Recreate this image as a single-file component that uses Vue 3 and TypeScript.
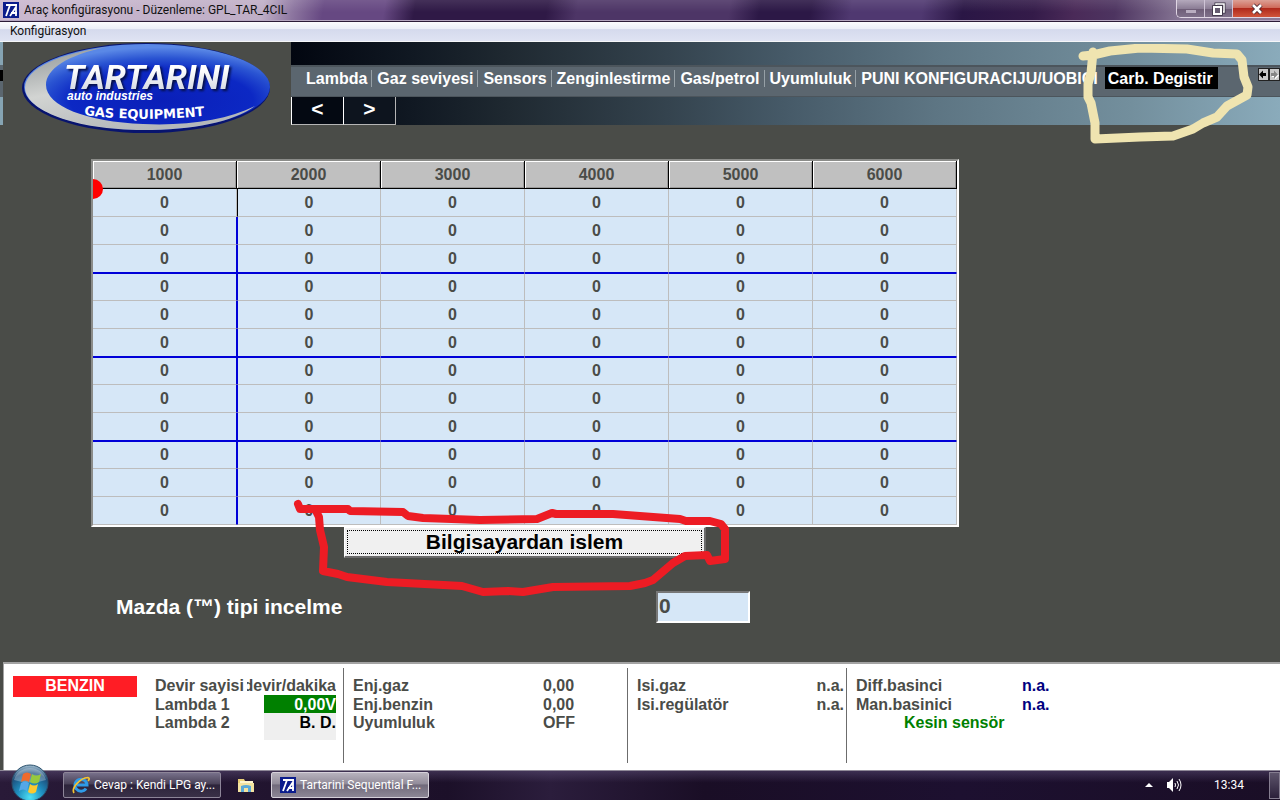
<script setup lang="ts">
import { ref } from 'vue'

const tabs: string[] = [
  'Lambda',
  'Gaz seviyesi',
  'Sensors',
  'Zenginlestirme',
  'Gas/petrol',
  'Uyumluluk',
  'PUNI KONFIGURACIJU/UOBICI',
  'Carb. Degistir',
]
const activeTab = ref<string>('Carb. Degistir')

const columns: number[] = [1000, 2000, 3000, 4000, 5000, 6000]
const rows: number[][] = Array.from({ length: 12 }, () => columns.map(() => 0))
const thinning = ref<string>('0')
</script>

<template>
  <div class="screen">
    <header class="titlebar">
      <svg class="app-icon" viewBox="0 0 16 16" aria-hidden="true">
        <rect width="16" height="16" fill="#0b1c8c" />
        <path d="M3 3h11M7 3L3 14M7 14l6-9v9M8 11h6" stroke="#fff" stroke-width="1.8" fill="none" />
      </svg>
      <h1>Araç konfigürasyonu - Düzenleme: GPL_TAR_4CIL</h1>
      <div class="window-buttons">
        <button type="button" aria-label="Minimize">
          <svg width="12" height="12" viewBox="0 0 12 12"><rect x="1" y="7" width="10" height="3" fill="#b9adc0" /></svg>
        </button>
        <button type="button" aria-label="Restore">
          <svg width="14" height="14" viewBox="0 0 14 14">
            <path d="M4 4V2h8v8h-2" fill="none" stroke="#3b3344" stroke-width="3" />
            <path d="M4 3V2h8v8h-1" fill="none" stroke="#fff" stroke-width="1.5" />
            <rect x="2" y="5" width="7" height="7" fill="none" stroke="#3b3344" stroke-width="3.6" />
            <rect x="2" y="5" width="7" height="7" fill="#655b70" stroke="#fff" stroke-width="2" />
          </svg>
        </button>
        <button type="button" class="close" aria-label="Close">
          <svg width="14" height="12" viewBox="0 0 14 12">
            <path d="M3 2l8 8M11 2l-8 8" stroke="#4c2830" stroke-width="4.4" />
            <path d="M3 2l8 8M11 2l-8 8" stroke="#fff" stroke-width="2.6" />
          </svg>
        </button>
      </div>
    </header>

    <nav class="menubar"><button type="button">Konfigürasyon</button></nav>

    <main class="workspace">
      <div class="head">
        <div class="edge"><i class="edge-band"></i></div>
        <div class="brand">
          <svg class="logo" viewBox="0 0 252 92" role="img" aria-label="Tartarini auto industries gas equipment">
            <defs>
              <radialGradient id="blue" cx="0.56" cy="0.66" r="0.62">
                <stop offset="0" stop-color="#0a1fb8" />
                <stop offset="0.6" stop-color="#0c28c4" />
                <stop offset="0.8" stop-color="#2a54d2" />
                <stop offset="1" stop-color="#5a88e6" />
              </radialGradient>
              <linearGradient id="silver" x1="0" y1="0" x2="0.5" y2="1">
                <stop offset="0" stop-color="#8e9496" />
                <stop offset="0.5" stop-color="#d2d4d2" />
                <stop offset="1" stop-color="#b4b8ba" />
              </linearGradient>
              <linearGradient id="letters" x1="0" y1="0" x2="0" y2="1">
                <stop offset="0.3" stop-color="#fff" />
                <stop offset="1" stop-color="#c9cfdb" />
              </linearGradient>
              <path id="arc" d="M63 73Q126 81 200 72" />
            </defs>
            <ellipse cx="125" cy="46" rx="124" ry="45" fill="#08146e" />
            <ellipse cx="126" cy="45" rx="123" ry="43" fill="url(#blue)" />
            <path d="M86 5C40 11 4 26 4 46c0 22 50 42 118 42 50 0 90-8 112-24-28 14-68 20-112 18C66 80 25 64 25 43 25 27 46 13 86 5z" fill="url(#silver)" />
            <g font-weight="700">
              <text class="wordmark" x="43" y="47" font-size="34" font-style="italic" fill="url(#letters)">TARTARINI</text>
              <text x="46" y="58" font-size="12" font-style="italic" fill="#fff">auto industries</text>
              <text class="tagline" font-size="13" fill="#fff"><textPath href="#arc">GAS EQUIPMENT</textPath></text>
            </g>
          </svg>
        </div>
        <div class="banner">
          <div class="tabband">
            <div class="tabs" role="tablist">
              <button
                v-for="tab in tabs"
                :key="tab"
                type="button"
                role="tab"
                :aria-selected="tab === activeTab"
                :class="{ active: tab === activeTab }"
                @click="activeTab = tab"
              >{{ tab }}</button>
            </div>
            <div class="scrollers">
              <button type="button" aria-label="Scroll tabs left">
                <svg width="9" height="9" viewBox="0 0 9 9"><path d="M0 4.500l4-4v2.500h3v3h-3v2.500z" fill="#000" /></svg>
              </button>
              <button type="button" aria-label="Scroll tabs right">
                <svg width="9" height="9" viewBox="0 0 9 9">
                  <path d="M9 5.500l-4-4v2.500h-3v3h3v2.500z" fill="#fff" />
                  <path d="M8 4.500l-4-4v2.500h-3v3h3v2.500z" fill="#858585" />
                </svg>
              </button>
            </div>
          </div>
          <div class="pager">
            <button type="button">&lt;</button>
            <button type="button">&gt;</button>
          </div>
        </div>
      </div>

      <div class="sheet">
        <table>
          <thead>
            <tr><th v-for="c in columns" :key="c" scope="col">{{ c }}</th></tr>
          </thead>
          <tbody>
            <tr v-for="(row, r) in rows" :key="r">
              <td v-for="(cell, c) in row" :key="c">{{ cell }}</td>
            </tr>
          </tbody>
        </table>
        <span class="marker"></span>
      </div>

      <div class="action"><button type="button"><span>Bilgisayardan islem</span></button></div>

      <div class="field">
        <label for="thinning">Mazda (™) tipi incelme</label>
        <input id="thinning" v-model="thinning" type="text" />
      </div>

      <svg class="ink red" width="450" height="110" viewBox="289 496 450 110" aria-hidden="true">
        <path d="M298 504L300 509 348 509 350 511 403 512 408 516 423 518 480 520 537 519 552 513 556 514 613 514 680 519 686 521 710 521 721 524 725 529 725 559 710 561 707 555 685 556 673 563 653 580 645 583 630 586 553 587 523 592 508 591 483 592 462 586 387 582 347 577 338 574 323 571 324 547 320 530 319 517 316 511" />
      </svg>
      <svg class="ink yellow" width="176" height="104" viewBox="1078 44 176 104" aria-hidden="true">
        <path d="M1083 56L1093 55 1110 51 1140 48 1187 49 1213 53 1237 54 1242 60 1244 77 1248 87 1247 95 1227 106 1217 117 1203 123 1193 129 1173 136 1140 137 1095 139 1095 123 1091 103 1088 97 1088 84 1091 73 1093 52" />
      </svg>
    </main>

    <footer class="status">
      <section class="group first">
        <strong class="fuel">BENZIN</strong>
        <dl>
          <div><dt>Devir sayisi</dt><dd class="unit">devir/dakika</dd></div>
          <div><dt>Lambda 1</dt><dd class="on">0,00V</dd></div>
          <div><dt>Lambda 2</dt><dd class="off">B. D.</dd></div>
        </dl>
      </section>
      <section class="group second">
        <dl>
          <div><dt>Enj.gaz</dt><dd>0,00</dd></div>
          <div><dt>Enj.benzin</dt><dd>0,00</dd></div>
          <div><dt>Uyumluluk</dt><dd>OFF</dd></div>
        </dl>
      </section>
      <section class="group third">
        <dl>
          <div><dt>Isi.gaz</dt><dd>n.a.</dd></div>
          <div><dt>Isi.regülatör</dt><dd>n.a.</dd></div>
        </dl>
      </section>
      <section class="group fourth">
        <dl>
          <div><dt>Diff.basinci</dt><dd>n.a.</dd></div>
          <div><dt>Man.basinici</dt><dd>n.a.</dd></div>
        </dl>
        <p>Kesin sensör</p>
      </section>
    </footer>

    <div class="taskbar">
      <button type="button" class="start" aria-label="Start">
        <svg width="38" height="38" viewBox="0 0 38 38">
          <defs>
            <radialGradient id="orb" cx="0.5" cy="0.9" r="0.9">
              <stop offset="0" stop-color="#4fe0f4" />
              <stop offset="0.4" stop-color="#1f8fc0" />
              <stop offset="0.75" stop-color="#1d4f7c" />
              <stop offset="1" stop-color="#a9c3d4" />
            </radialGradient>
          </defs>
          <circle cx="19" cy="19" r="18" fill="url(#orb)" stroke="#29506c" />
          <path d="M3 16a16.500 16 0 0 1 32 0q-16 5-32 0z" fill="#fff" opacity="0.28" />
          <path d="M12 10q4-3 8 0l-2 8q-4-3-8 0z" fill="#ee6a2c" />
          <path d="M21 10q4 3 9 0l-2 8q-4 3-9 0z" fill="#97c93d" />
          <path d="M10 19q4-3 8 0l-2 8q-4-3-8 0z" fill="#54a7e8" />
          <path d="M19 20q4 3 8 0l-2 8q-4 3-8 0z" fill="#fdc92e" />
        </svg>
      </button>
      <button type="button" class="task">
        <svg width="18" height="18" viewBox="0 0 18 18" aria-hidden="true">
          <path d="M14 12.500A6 6 0 1 1 15 9H5" fill="none" stroke="#2f9be8" stroke-width="3" />
          <path d="M2 17C-1 12 8 2 16 1.500 18 2 17 4 16 5" fill="none" stroke="#f4c431" stroke-width="1.700" />
        </svg>
        <span>Cevap : Kendi LPG ay...</span>
      </button>
      <button type="button" class="pinned" aria-label="Explorer">
        <svg width="18" height="16" viewBox="0 0 18 16">
          <path d="M1 2h6l1 2h8v11H1z" fill="#e9cf77" />
          <path d="M3 4h13v3H3z" fill="#fff6cf" />
          <path d="M1 6h16v9H1z" fill="#f4e3a0" />
          <path d="M4 15V9q5-2 10 0v6h-3v-4H7v4z" fill="#5aa9d8" />
        </svg>
      </button>
      <button type="button" class="task current">
        <svg width="16" height="16" viewBox="0 0 16 16" aria-hidden="true">
          <rect width="16" height="16" fill="#0b1c8c" />
          <path d="M3 3h11M7 3L3 14M7 14l6-9v9M8 11h6" stroke="#fff" stroke-width="1.8" fill="none" />
        </svg>
        <span>Tartarini Sequential F...</span>
      </button>
      <div class="tray">
        <button type="button" aria-label="Show hidden icons">
          <svg width="8" height="4" viewBox="0 0 8 4"><path d="M0 4l4-4 4 4z" fill="#fff" /></svg>
        </button>
        <button type="button" aria-label="Volume">
          <svg width="16" height="14" viewBox="0 0 16 14">
            <path d="M1 4h2l4-4v14l-4-4H1z" fill="#fff" />
            <path d="M9 5q1 2 0 4M11 3q3 4 0 8M13 1q4 6 0 12" fill="none" stroke="#fff" />
          </svg>
        </button>
        <time>13:34</time>
        <button type="button" class="peek" aria-label="Show desktop"></button>
      </div>
    </div>
  </div>
</template>

<style>
body {
  margin: 0;
  background: #4a4c48;
}
</style>

<style scoped>
* {
  box-sizing: border-box;
}
button {
  font: inherit;
  color: inherit;
  margin: 0;
  padding: 0;
  border: 0;
  background: none;
}
.screen {
  display: flex;
  flex-direction: column;
  min-height: 100vh;
  font-family: 'Liberation Sans', Arial, sans-serif;
  font-weight: 700;
  font-size: 16px;
  line-height: 18px;
  color: #4a4c48;
}

.titlebar {
  display: flex;
  align-items: center;
  height: 21px;
  padding-left: 3px;
  gap: 5px;
  background:
    linear-gradient(rgba(255, 255, 255, 0.1), rgba(255, 255, 255, 0) 60%),
    linear-gradient(100deg, #cbb9cf 0, #bfaec6 260px, #8d76a0 290px, #664882 320px, #664882 380px, #2f1946 410px, #2f1946 540px, #4d3566 570px, #4d3566 720px, #2c1846 750px, #2c1846 800px, #4f3870 840px, #4f3870 910px, #2a1645 950px, #341b49 1020px, #4a2a58 1060px, #4d3460 1100px, #8a7a98 1170px, #8a7a98 100%);
  border-bottom: 1px solid #b5a6c0;
}
.app-icon {
  width: 16px;
  height: 16px;
}
h1 {
  flex: 1;
  margin: 0;
  font: 400 12px/20px Roboto, 'Open Sans', sans-serif;
  color: #111;
}
.window-buttons {
  display: flex;
  align-self: flex-start;
  height: 18px;
  border: 1px solid #e0d6e4;
  border-top: 0;
  border-right: 0;
  border-radius: 0 0 0 5px;
  overflow: hidden;
}
.window-buttons button {
  display: flex;
  align-items: center;
  justify-content: center;
  width: 28px;
  border-right: 1px solid #cfc4d6;
  background: linear-gradient(#b4a9bc, #8c7e96 50%, #6d5c76 51%, #7f708a);
}
.window-buttons .close {
  width: 47px;
  border-right: 0;
  background: linear-gradient(#dca095, #cf6b5b 45%, #b02a1c 50%, #d0543b);
}

.menubar {
  display: flex;
  height: 21px;
  padding-left: 10px;
  background: linear-gradient(#fbfcfe, #eceff8 35%, #d5daed 40%, #dfe3f3);
  border-top: 1px solid #2c1c38;
  border-bottom: 1px solid #f5f6f8;
}
.menubar button {
  font: 400 12px/19px Roboto, 'Open Sans', sans-serif;
  color: #111;
}

.workspace {
  position: relative;
  flex: 1;
  background: #4a4c48;
}
.head {
  display: flex;
  height: 83px;
}
.edge {
  width: 3px;
  padding-top: 23px;
  background: #86a4b3;
}
.edge-band {
  display: block;
  height: 32px;
  background: linear-gradient(#5b666f 5px, #000 5px, #000 16px, #5b666f 16px);
}
.brand {
  width: 288px;
  padding-left: 18px;
}
.logo {
  display: block;
  width: 252px;
  height: 92px;
  overflow: visible;
}
.wordmark {
  font-family: Roboto, 'Liberation Sans', sans-serif;
  filter: drop-shadow(2px 2px 1px #06104a);
}
.tagline {
  font-family: 'DejaVu Sans', sans-serif;
}
.banner {
  flex: 1;
  min-width: 0;
  padding-top: 23px;
  background: linear-gradient(90deg, #020610, #101822 12%, #1f2931 22%, #34434e 38%, #465a68 50%, #5d7583 65%, #738f9d 85%, #8aabbb);
}
.tabband {
  display: flex;
  justify-content: space-between;
  height: 32px;
  padding-left: 10px;
  background: #5b666f;
  border-top: 2px solid #4c555c;
  border-bottom: 1px solid #4c555c;
  color: #fff;
}
.tabs {
  display: flex;
  white-space: nowrap;
}
.tabs button {
  height: 17px;
  margin-top: 3px;
  padding: 0 4px 0 5px;
  line-height: 17px;
  border-right: 1px solid #96a0a6;
}
.tabs button:nth-last-child(2) {
  border: 0;
}
.tabs .active {
  height: 22px;
  margin: 0 0 0 3px;
  padding: 0 5px 0 3px;
  line-height: 23px;
  border: 0;
  background: #000;
}
.scrollers {
  display: flex;
  padding-top: 1px;
}
.scrollers button {
  display: flex;
  align-items: center;
  justify-content: center;
  width: 11px;
  height: 13px;
  background: #c8c8c8;
  border: 1px solid #222;
}
.pager {
  display: flex;
  height: 28px;
}
.pager button {
  width: 52px;
  height: 28px;
  font-size: 21px;
  line-height: 22px;
  padding-bottom: 4px;
  color: #fff;
  background: #040912;
  border-left: 1px solid #fff;
  border-bottom: 1px solid #b5b5b5;
}
.pager button:last-child {
  width: 53px;
  background: #0d141e;
  border-right: 1px solid #b5b5b5;
}

.sheet {
  position: relative;
  margin: 34px 321px 0 91px;
  border: 2px solid #fff;
  border-top-color: #8b8c89;
  border-left-color: #8b8c89;
  background: #d6e7f7;
}
table {
  width: 100%;
  table-layout: fixed;
  border-collapse: separate;
  border-spacing: 0;
}
th,
td {
  height: 28px;
  padding: 0;
  text-align: center;
  line-height: 18px;
  border-right: 1px solid #bdbdbd;
  border-bottom: 1px solid #bdbdbd;
}
th {
  background: #c0c0c0;
  border-right-color: #000;
  border-bottom-color: #000;
  box-shadow: inset 1px 1px 0 #fff, inset -1px -1px 0 #9a9a9a;
}
tbody tr:nth-child(3n):not(:last-child) td {
  border-bottom-color: #0000d8;
}
tbody tr:nth-child(3n + 1):not(:first-child) td {
  border-top: 1px solid #0000d8;
}
tbody tr:not(:first-child) td:first-child {
  border-right-color: #0000d8;
}
td:nth-child(2) {
  border-left: 1px solid #0000d8;
}
tbody tr:first-child td:nth-child(2) {
  border-left-color: #000;
}
.marker {
  position: absolute;
  left: 0;
  top: 18px;
  width: 10px;
  height: 20px;
  border-radius: 0 10px 10px 0;
  background: #f00;
}

.action {
  display: flex;
  justify-content: center;
  margin: 0 321px 0 91px;
}
.action button {
  width: 362px;
  height: 31px;
  padding: 2px;
  background: #f0f0f0;
  border: 1px solid #fff;
  border-right: 2px solid #6b6b6b;
  border-bottom: 2px solid #6b6b6b;
  color: #000;
}
.action span {
  display: block;
  border: 1px dotted #000;
  font-size: 21px;
  line-height: 22px;
}
.field {
  display: flex;
  align-items: center;
  justify-content: space-between;
  margin: 33px 530px 0 116px;
  color: #fff;
  font-size: 21px;
}
.field input {
  width: 94px;
  height: 32px;
  padding: 0 1px 2px;
  font: 700 21px/24px 'Liberation Sans', Arial, sans-serif;
  color: #4a4c48;
  background: #d6e7f7;
  border: 2px solid #fff;
  border-top-color: #777;
  border-left-color: #777;
  border-radius: 0;
  outline: 0;
}
.ink {
  position: absolute;
  fill: none;
  stroke-linecap: round;
  stroke-linejoin: round;
  pointer-events: none;
}
.red {
  left: 289px;
  top: 454px;
  stroke: #ed1c24;
  stroke-width: 8px;
}
.yellow {
  left: 1078px;
  top: 2px;
  stroke: #efe4b0;
  stroke-width: 9px;
}

.status {
  display: grid;
  grid-template-columns: 340px 284px 219px 1fr;
  height: 108px;
  padding: 4px 0 7px;
  margin-left: 3px;
  background: #fff;
  border-top: 2px solid #a3a3a3;
  border-left: 1px solid #a3a3a3;
  line-height: 20px;
}
.group {
  padding: 8px 0 0 9px;
  border-right: 1px solid #6c6c6c;
}
.group:last-child {
  border: 0;
}
dl,
dd,
p {
  margin: 0;
}
dl div {
  display: flex;
  justify-content: space-between;
  height: 18px;
}
dl div:first-child {
  height: 19px;
}
.first {
  display: grid;
  grid-template-columns: 124px 1fr;
  gap: 18px;
  padding-right: 7px;
}
.fuel {
  height: 21px;
  background: #ff1d25;
  color: #fff;
  text-align: center;
  line-height: 19px;
}
.first dt {
  white-space: nowrap;
}
.first dd {
  flex: 0 0 72px;
  text-align: right;
}
.first dd.unit {
  display: flex;
  justify-content: flex-end;
  flex-basis: 89px;
  margin-left: -8px;
  overflow: hidden;
  background: #fff;
}
.first dd.on {
  background: #008000;
  color: #fff;
}
.first dd.off {
  height: 27px;
  background: #efefef;
  color: #000;
}
.second dt {
  width: 190px;
}
.second dl div,
.fourth dl div {
  justify-content: flex-start;
}
.third {
  padding-right: 2px;
}
.fourth dt {
  width: 166px;
}
.fourth dd {
  color: #000080;
}
.fourth p {
  padding-left: 48px;
  color: #008000;
}

.taskbar {
  position: relative;
  display: flex;
  height: 30px;
  padding: 1px 0 2px 63px;
  background:
    linear-gradient(rgba(120, 105, 150, 0.35), rgba(0, 0, 0, 0) 40%),
    linear-gradient(90deg, #291a38, #1c1029 35%, #2b1d3c 43%, #1a0e26 55%, #1d1030 75%, #1a0e26);
  border-top: 1px solid #8f8998;
  color: #fff;
  font: 400 12px/20px Roboto, 'Open Sans', sans-serif;
}
.start {
  position: absolute;
  left: 11px;
  top: -7px;
  width: 38px;
  height: 37px;
  overflow: hidden;
}
.start svg {
  display: block;
}
.task {
  display: flex;
  align-items: center;
  gap: 4px;
  width: 158px;
  padding-left: 8px;
  border: 1px solid #8d8598;
  border-radius: 2px;
  background: linear-gradient(#77708a, #4a4258 45%, #2d243b 50%, #393047);
  white-space: nowrap;
}
.task.current {
  border-color: #d5d0da;
  background: linear-gradient(#b7b2bd, #928c9a 45%, #716a7b 50%, #8c8695);
}
.pinned {
  display: flex;
  align-items: center;
  justify-content: center;
  width: 50px;
}
.tray {
  display: flex;
  align-items: center;
  gap: 13px;
  margin-left: auto;
}
.tray button {
  display: flex;
}
.tray time {
  margin-left: 19px;
  margin-right: 12px;
}
.tray .peek {
  width: 11px;
  height: 27px;
  border: 1px solid #857d90;
  background: linear-gradient(#5d546b, #2b203a);
}
</style>
